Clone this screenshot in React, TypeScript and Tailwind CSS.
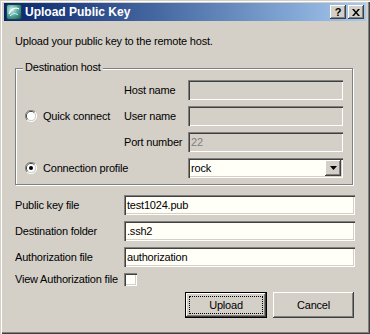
import React from 'react';

const sunken =
  'shadow-[inset_1px_1px_0_#808080,inset_2px_2px_0_#404040,inset_-1px_-1px_0_#ffffff,inset_-2px_-2px_0_#d4d0c8]';
const raised =
  'shadow-[inset_-1px_-1px_0_#404040,inset_1px_1px_0_#ffffff,inset_-2px_-2px_0_#808080,inset_2px_2px_0_#d4d0c8]';

function Radio({ checked }: { checked?: boolean }) {
  return (
    <svg width="12" height="12" viewBox="0 0 12 12" className="shrink-0">
      <path d="M10 2 A5.5 5.5 0 0 0 2 10" fill="none" stroke="#808080" strokeWidth="1" />
      <path d="M9.2 2.8 A4.5 4.5 0 0 0 2.8 9.2" fill="none" stroke="#404040" strokeWidth="1" />
      <path d="M2 10 A5.5 5.5 0 0 0 10 2" fill="none" stroke="#ffffff" strokeWidth="1" />
      <path d="M2.8 9.2 A4.5 4.5 0 0 0 9.2 2.8" fill="none" stroke="#d4d0c8" strokeWidth="1" />
      <circle cx="6" cy="6" r="4" fill="#ffffff" />
      {checked && <circle cx="6" cy="6" r="2" fill="#000000" />}
    </svg>
  );
}

function Field({ value, disabled }: { value?: string; disabled?: boolean }) {
  return (
    <div
      className={`h-[20px] flex items-center px-[3px] ${sunken} ${
        disabled ? 'bg-[#d4d0c8] text-[#808080]' : 'bg-[#fffff7] text-black'
      }`}
    >
      {value}
    </div>
  );
}

function AppIcon() {
  return (
    <svg width="16" height="16" viewBox="0 0 16 16" className="shrink-0">
      <defs>
        <radialGradient id="ic" cx="0.35" cy="0.35" r="0.8">
          <stop offset="0" stopColor="#d8f4ee" />
          <stop offset="0.45" stopColor="#5fb0a8" />
          <stop offset="1" stopColor="#1d5e62" />
        </radialGradient>
      </defs>
      <rect x="0.5" y="0.5" width="15" height="15" rx="2" fill="url(#ic)" stroke="#16404a" />
      <path d="M3 10 C5 4, 10 3, 13 5" fill="none" stroke="#ffffff" strokeWidth="1.2" />
      <path d="M4 12 C7 9, 10 9, 12 11" fill="none" stroke="#d8fff4" strokeWidth="1" />
    </svg>
  );
}

export default function App() {
  return (
    <div className="w-[370px] h-[334px] bg-[#d4d0c8] pt-[3px] px-[4px] font-['Liberation_Sans',Arial,sans-serif] text-[11px] leading-[13px] tracking-[-0.2px] text-black shadow-[inset_1px_1px_0_#d4d0c8,inset_2px_2px_0_#ffffff,inset_-1px_-1px_0_#404040,inset_-2px_-2px_0_#808080] overflow-hidden">
      {/* Title bar */}
      <div className="h-[18px] flex items-center bg-linear-to-r from-[#0a246a] to-[#a6caf0] pl-[2px] pr-[2px]">
        <AppIcon />
        <span className="ml-[3px] text-white font-bold text-[12px] tracking-normal">Upload Public Key</span>
        <div className="ml-auto flex gap-[2px]">
          <div className={`w-[16px] h-[14px] bg-[#d4d0c8] ${raised} flex items-center justify-center font-bold text-[11px] leading-none`}>
            ?
          </div>
          <div className={`w-[16px] h-[14px] bg-[#d4d0c8] ${raised} flex items-center justify-center`}>
            <svg width="8" height="7" viewBox="0 0 8 7">
              <path d="M0 0 L2 0 L4 2.5 L6 0 L8 0 L5 3.5 L8 7 L6 7 L4 4.5 L2 7 L0 7 L3 3.5 Z" fill="#000" />
            </svg>
          </div>
        </div>
      </div>

      <div className="px-[11px]">
        <p className="pt-[14px]">Upload your public key to the remote host.</p>

        {/* Destination host group */}
        <div className="relative mt-[20px] w-[338px] h-[117px] border border-[#808080] shadow-[1px_1px_0_#ffffff,inset_1px_1px_0_#ffffff] pt-[11px] pl-[9px]">
          <span className="absolute left-[7px] top-[-8px] bg-[#d4d0c8] px-[2px]">Destination host</span>
          <div className="grid grid-cols-[99px_64px_155px] grid-rows-[20px_20px_20px_20px] gap-y-[6px]">
            <div className="row-span-3 flex items-center gap-[6px]">
              <Radio />
              <span>Quick connect</span>
            </div>
            <div className="flex items-center">Host name</div>
            <Field disabled />
            <div className="flex items-center">User name</div>
            <Field disabled />
            <div className="flex items-center">Port number</div>
            <Field disabled value="22" />
            <div className="col-span-2 flex items-center gap-[6px]">
              <Radio checked />
              <span>Connection profile</span>
            </div>
            <div className={`h-[20px] flex items-center pl-[3px] pr-[2px] bg-[#fffff7] ${sunken}`}>
              <span className="flex-1">rock</span>
              <div className={`w-[16px] h-[16px] bg-[#d4d0c8] ${raised} flex items-center justify-center`}>
                <svg width="7" height="4" viewBox="0 0 7 4">
                  <path d="M0 0 L7 0 L3.5 4 Z" fill="#000" />
                </svg>
              </div>
            </div>
          </div>
        </div>

        {/* File settings */}
        <div className="mt-[10px] grid grid-cols-[109px_231px] grid-rows-[20px_20px_20px_13px] gap-y-[6px]">
          <div className="flex items-center">Public key file</div>
          <Field value="test1024.pub" />
          <div className="flex items-center">Destination folder</div>
          <Field value=".ssh2" />
          <div className="flex items-center">Authorization file</div>
          <Field value="authorization" />
          <div className="flex items-center">View Authorization file</div>
          <div className={`w-[13px] h-[13px] bg-[#fffff7] ${sunken}`} />
        </div>

        {/* Buttons */}
        <div className="mt-[6px] w-[339px] flex justify-end gap-[6px]">
          <button className="w-[82px] h-[26px] bg-[#d4d0c8] border border-black shadow-[inset_-1px_-1px_0_#404040,inset_1px_1px_0_#ffffff,inset_-2px_-2px_0_#808080] p-[3px]">
            <div className="w-full h-full border border-dotted border-black flex items-center justify-center">Upload</div>
          </button>
          <button className={`w-[81px] h-[26px] bg-[#d4d0c8] ${raised} flex items-center justify-center`}>Cancel</button>
        </div>
      </div>
    </div>
  );
}
